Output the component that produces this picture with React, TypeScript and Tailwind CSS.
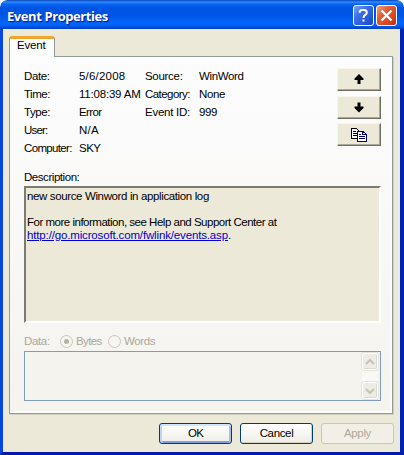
import React from 'react';

const details = [
  { label: 'Date:', labelTracking: 'tracking-[-0.4px]', value: '5/6/2008', valueTracking: 'tracking-[0.2px]', label2: 'Source:', label2Tracking: 'tracking-[-0.3px]', value2: 'WinWord' },
  { label: 'Time:', labelTracking: 'tracking-[-0.5px]', value: '11:08:39 AM', valueTracking: 'tracking-[-0.2px]', label2: 'Category:', label2Tracking: 'tracking-[-0.55px]', value2: 'None' },
  { label: 'Type:', labelTracking: 'tracking-[-0.4px]', value: 'Error', valueTracking: 'tracking-[-0.6px]', label2: 'Event ID:', label2Tracking: 'tracking-[-0.25px]', value2: '999' },
  { label: 'User:', labelTracking: 'tracking-[-0.8px]', value: 'N/A', valueTracking: 'tracking-[0.2px]', label2: '', label2Tracking: '', value2: '' },
  { label: 'Computer:', labelTracking: 'tracking-[-0.65px]', value: 'SKY', valueTracking: 'tracking-[-0.5px]', label2: '', label2Tracking: '', value2: '' },
];

function TitleBar() {
  return (
    <header className="flex h-[29px] shrink-0 items-start rounded-t-[7px] bg-[linear-gradient(180deg,#0843b8_0px,#2f8cff_2px,#0967f5_4px,#0054e3_8px,#0055e5_16px,#0264fb_22px,#0062f6_25px,#004bd0_28px,#0039b5_29px)] px-[7px]">
      <h1 className="mt-[7px] flex-1 whitespace-nowrap font-['Open_Sans','Noto_Sans',sans-serif] text-[13px] font-bold leading-[18px] tracking-[-0.42px] text-white [text-shadow:1px_1px_1px_#0a1883]">
        Event Properties
      </h1>
      <button className="mt-[5px] flex h-[21px] w-[21px] items-center justify-center rounded-[3px] border border-white bg-[linear-gradient(135deg,#7ea5f5_0%,#3b70e8_35%,#2458d8_75%,#1746bd_100%)]">
        <svg width="19" height="19" viewBox="0 0 19 19" fill="none" stroke="#fff">
          <path d="M5.8 6.7V5.4Q6.2 3.9 8 3.9H10.4Q12.8 4.1 12.8 6.5Q12.8 8 11 9.1Q9.5 10 9.5 12" strokeWidth="2" />
          <path d="M9.5 13.5V15.5" strokeWidth="2" />
        </svg>
      </button>
      <button className="ml-[2px] mt-[5px] flex h-[21px] w-[21px] items-center justify-center rounded-[3px] border border-white bg-[linear-gradient(135deg,#f0a184_0%,#df603b_35%,#d6441d_75%,#b43211_100%)]">
        <svg width="19" height="19" viewBox="0 0 19 19" fill="none" stroke="#fff">
          <path d="M4.5 4.5L14.5 14.5M14.5 4.5L4.5 14.5" strokeWidth="2.2" />
        </svg>
      </button>
    </header>
  );
}

function SideButton({ children }: { children: React.ReactNode }) {
  return (
    <button className="flex h-[23px] w-[44px] items-center justify-center border border-b-[#716f64] border-l-[#f8f6ee] border-r-[#716f64] border-t-[#f8f6ee] bg-[#ece9d8] shadow-[inset_-1px_-1px_0_#aca899]">
      {children}
    </button>
  );
}

function ScrollArrow({ down = false }: { down?: boolean }) {
  return (
    <div className="flex h-[17px] w-[16px] items-center justify-center rounded-[2px] border border-white bg-[#eeede5] shadow-[inset_-1px_-1px_0_#dcdacc,0_0_0_1px_#e6e4da]">
      <svg width="10" height="8" viewBox="0 0 10 8" fill="none" stroke="#c6c4b8" strokeWidth="2.2">
        <path d={down ? 'M1 2L5 6L9 2' : 'M1 6L5 2L9 6'} />
      </svg>
    </div>
  );
}

function Radio({ checked = false }: { checked?: boolean }) {
  return (
    <span className="flex h-[13px] w-[13px] shrink-0 items-center justify-center rounded-full border border-[#c9c7ba] bg-[#f6f5f0]">
      {checked && <span className="h-[5px] w-[5px] rounded-full bg-[#b5b3a7]" />}
    </span>
  );
}

export default function App() {
  return (
    <div className="h-[455px] w-[404px] overflow-hidden bg-white">
      <main className="flex h-[455px] w-[404px] flex-col overflow-hidden rounded-t-[7px] bg-[#ece9d8] font-['Liberation_Sans',Arial,sans-serif] text-[11.5px] leading-[13px] tracking-[-0.35px] text-black">
        <TitleBar />
        <div className="flex flex-1 flex-col border-b-[3px] border-l-[3px] border-r-[4px] border-b-[#0019a8] border-l-[#0746dc] border-r-[#0023b5] pl-[6px] pt-[7px]">
          <div className="z-10 -mb-px flex h-[21px] w-[46px] overflow-hidden rounded-t-[3px] border-x border-t-[3px] border-x-[#919b9c] border-t-[#f0a52f] bg-[#fdfdfe]">
            <span className="ml-[7px] tracking-[-0.2px]">Event</span>
          </div>
          <section className="flex h-[358px] w-[384px] flex-col border border-[#919b9c] bg-linear-to-b from-[#fdfdfe] to-[#f4f3ee] pl-[14px] pt-[11px] shadow-[1px_1px_0_#d0cebf,inset_-2px_-2px_0_#fcfcfa]">
            <div className="flex h-[99px] justify-between pr-[11px]">
              <div className="-mt-px">
                {details.map((d) => (
                  <div key={d.label} className="grid h-[18px] grid-cols-[55px_66px_54px_80px] items-center whitespace-nowrap">
                    <span className={d.labelTracking}>{d.label}</span>
                    <span className={d.valueTracking}>{d.value}</span>
                    <span className={d.label2Tracking}>{d.label2}</span>
                    <span>{d.value2}</span>
                  </div>
                ))}
              </div>
              <div className="flex h-[78px] flex-col justify-between">
                <SideButton>
                  <svg width="10" height="11" viewBox="0 0 10 11"><path d="M5 0L9.5 4.5V6H6.5V10H3.5V6H.5V4.5Z" fill="#000" /></svg>
                </SideButton>
                <SideButton>
                  <svg width="10" height="11" viewBox="0 0 10 11"><path d="M5 10.5L.5 6V4.5H3.5V.5H6.5V4.5H9.5V6Z" fill="#000" /></svg>
                </SideButton>
                <SideButton>
                  <svg width="16" height="14" viewBox="0 0 16 14" shapeRendering="crispEdges">
                    <path d="M.5.5H5.5L8.5 3.5V10.5H.5Z" fill="#fff" stroke="#000" />
                    <path d="M2 3.5H5M2 5.5H6M2 7.5H6" stroke="#000" />
                    <path d="M6.5 3.5H12L15.5 6.5V13.5H6.5Z" fill="#fff" stroke="#000080" />
                    <path d="M11.5 3.5V6.5H15M8 6.5H10M8 8.5H14M8 10.5H14" stroke="#000080" fill="none" />
                  </svg>
                </SideButton>
              </div>
            </div>
            <h2 className="mt-[4px] h-[15px] tracking-[-0.45px]">Description:</h2>
            <div className="h-[137px] w-[357px] whitespace-nowrap border-2 border-b-white border-l-[#7d7b70] border-r-white border-t-[#7d7b70] bg-[#ece9d8] pl-px pt-[2px]">
              <p className="tracking-[-0.37px]">new source Winword in application log</p>
              <p className="mt-[13px] tracking-[-0.49px]">For more information, see Help and Support Center at</p>
              <p className="tracking-[-0.15px]">
                <a className="text-[#0000d0] underline">http://go.microsoft.com/fwlink/events.asp</a>.
              </p>
            </div>
            <div className="mt-[12px] flex h-[13px] items-center text-[#aca899]">
              <span className="w-[36px]">Data:</span>
              <Radio checked />
              <span className="ml-[3px] w-[32px] tracking-[-0.6px]">Bytes</span>
              <Radio />
              <span className="ml-[3px]">Words</span>
            </div>
            <div className="mt-[3px] flex h-[50px] w-[357px] justify-end border border-[#7f9db9] bg-[#f4f3ee] py-px pr-[2px]">
              <div className="flex flex-col justify-between bg-[#f9f8f5]">
                <ScrollArrow />
                <ScrollArrow down />
              </div>
            </div>
          </section>
          <footer className="mt-[9px] flex h-[21px] justify-end gap-[8px] pr-[6px]">
            <button className="w-[73px] rounded-[3px] border border-[#003c74] bg-linear-to-b from-white to-[#eeede6] tracking-[-0.8px] shadow-[inset_0_2px_0_#cee7ff,inset_2px_0_0_#bdd3f7,inset_-2px_0_0_#a4bdeb,inset_0_-2px_0_#7f9ddf]">OK</button>
            <button className="w-[73px] rounded-[3px] border border-[#003c74] bg-linear-to-b from-white to-[#eeede6] shadow-[inset_-1px_-1px_0_#d6d0c5]">Cancel</button>
            <button className="w-[73px] rounded-[3px] border border-[#c9c7ba] bg-[#f2f0e6] text-[#aca899]">Apply</button>
          </footer>
        </div>
      </main>
    </div>
  );
}
